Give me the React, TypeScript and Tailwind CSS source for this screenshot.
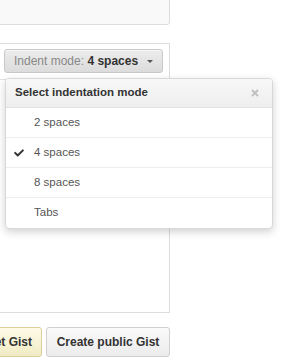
import { FaCheck } from 'react-icons/fa';

const modes = ['2 spaces', '4 spaces', '8 spaces', 'Tabs'];

export default function App() {
	return (
		<div className="relative h-[363px] w-[282px] overflow-hidden bg-white font-['Liberation_Sans',Arial,sans-serif] text-[#333]">
			<div className="-ml-[100px] flex w-[270px] flex-col">
				{/* description box */}
				<div className="-mt-[20px] h-[45px] rounded-br-[3px] border border-[#ddd] bg-[#f9f9f9]"></div>

				{/* editor box */}
				<div className="mt-[18px] h-[270px] border border-[#ddd] bg-white">
					<div className="flex justify-end border-b border-[#e5e5e5] pt-[5px] pr-[6px] pb-[6px]">
						<button className="flex h-[24px] w-[159px] items-center rounded-[3px] border border-[#c8c8c8] bg-gradient-to-b from-[#ececec] to-[#dcdcdc] pl-[9px] text-[12px] shadow-[inset_0_1px_0_rgba(255,255,255,0.6)]">
							<span className="text-[#888]">Indent mode:&nbsp;</span>
							<span className="font-bold text-[#333]">4 spaces</span>
							<span className="ml-[9px] h-0 w-0 border-x-[3px] border-t-[3px] border-x-transparent border-t-[#555]"></span>
						</button>
					</div>
				</div>

				{/* actions */}
				<div className="mt-[14px] flex justify-end gap-[4px]">
					<button className="h-[30px] whitespace-nowrap rounded-[3px] border border-[#d9cf9c] bg-gradient-to-b from-[#fdfbe8] to-[#f1ebc4] px-[9px] text-[12px] font-bold text-[#333]">
						Create secret Gist
					</button>
					<button className="h-[30px] w-[124px] whitespace-nowrap rounded-[3px] border border-[#d0d0d0] bg-gradient-to-b from-[#fafafa] to-[#ececec] text-[12px] font-bold text-[#333]">
						Create public Gist
					</button>
				</div>
			</div>

			{/* indent mode menu */}
			<div className="absolute left-[5px] top-[78px] w-[268px] overflow-hidden rounded-[4px] border border-[#d8d8d8] bg-white shadow-[0_3px_8px_rgba(0,0,0,0.18)]">
				<div className="flex h-[29px] items-center justify-between border-b border-[#e0e0e0] bg-gradient-to-b from-[#f8f8f8] to-[#eeeeee] pl-[9px] pr-[13px]">
					<span className="text-[11.5px] font-bold text-[#333]">Select indentation mode</span>
					<svg width="8" height="8" viewBox="0 0 8 8" className="text-[#c0c0c0]">
						<path d="M1 1L7 7M7 1L1 7" stroke="currentColor" strokeWidth="2" />
					</svg>
				</div>
				{modes.map((mode, i) => (
					<div
						key={mode}
						className={`relative flex h-[30px] items-center pl-[28px] text-[11.5px] text-[#555] ${i < modes.length - 1 ? 'border-b border-[#eee]' : ''}`}
					>
						{mode === '4 spaces' && <FaCheck className="absolute left-[8px] top-[10px] text-[#333]" size={10} />}
						{mode}
					</div>
				))}
			</div>
		</div>
	);
}
